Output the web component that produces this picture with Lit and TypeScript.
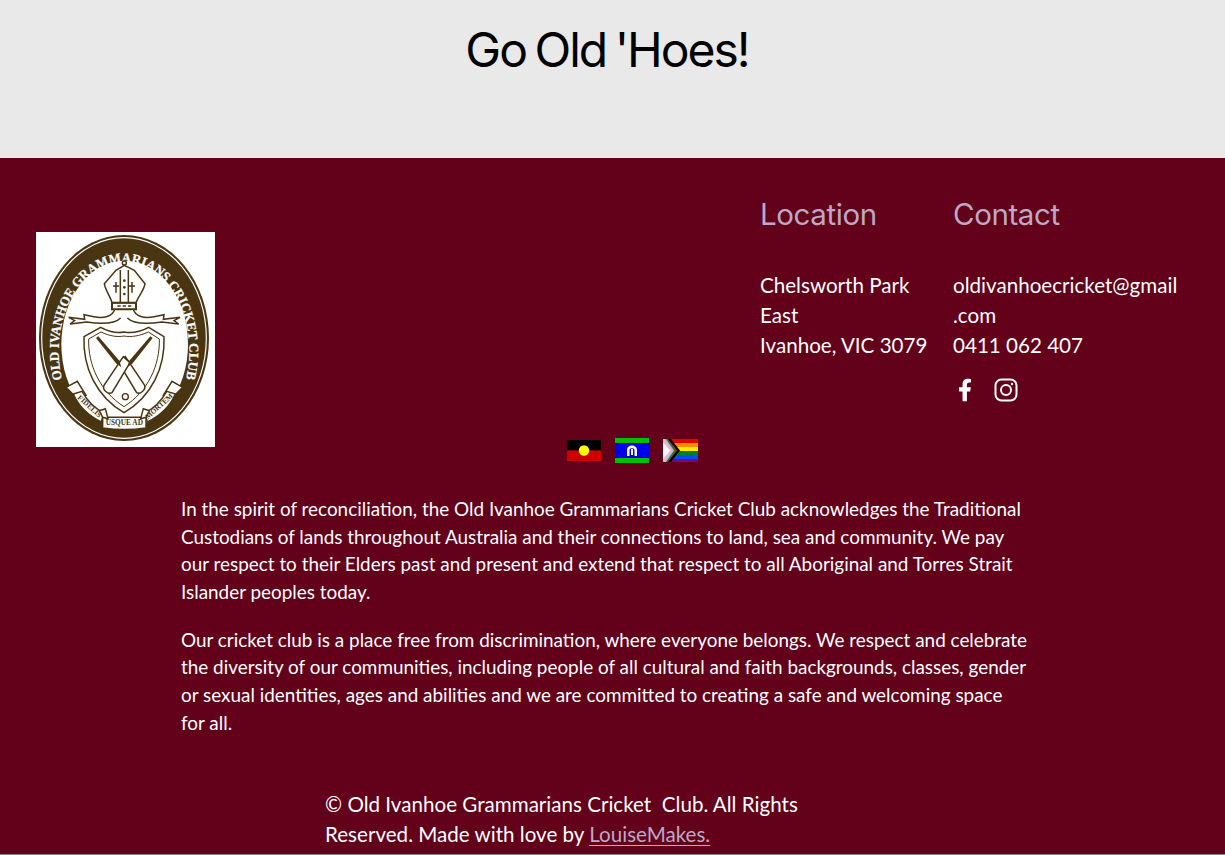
import { LitElement, html, css, svg } from "lit";
import { customElement } from "lit/decorators.js";

// crest is authored in 3x coordinates of the 179x215 badge
const crest = svg`
  <rect x="48" y="36" width="537" height="645" fill="#fff" />
  <ellipse cx="312" cy="354" rx="255" ry="309" fill="#4a3512" />
  <ellipse cx="312" cy="354" rx="247" ry="301" fill="none" stroke="#fff" stroke-width="3.5" />
  <ellipse cx="314" cy="373" rx="190" ry="251" fill="#fff" />
  <defs>
    <path id="ring" d="M 126 478 A 196 267 0 1 1 498 478" />
  </defs>
  <text class="ring-text" font-size="40">
    <textPath href="#ring" textLength="900" lengthAdjust="spacingAndGlyphs">OLD IVANHOE GRAMMARIANS CRICKET CLUB</textPath>
  </text>
  <g fill="none" stroke="#4a3512" stroke-width="4.5">
    <circle cx="313" cy="129" r="6" />
    <path d="M276 248 C270 226 256 212 253 191 L288 151 L313 136 L343 151 L375 191 C372 212 356 226 348 248 Z" fill="#fff" />
    <path d="M276 248 H348 V268 H276 Z" stroke-width="6" />
    <path d="M301 150 V246 M325 150 V246" />
    <path d="M288 186 V218 M279 198 H297 M336 186 V218 M327 198 H345" />
    <path d="M292 258 H302 M308 258 H318 M324 258 H334" />
    <path d="M284 268 C278 290 250 296 222 290 L192 284 L194 298 L146 292 L164 302 L150 312 L200 306 C240 312 284 312 302 294" fill="#fff" />
    <path d="M340 268 C346 290 374 296 402 290 L432 284 L430 298 L480 292 L462 302 L476 312 L426 306 C386 312 340 312 322 294" fill="#fff" />
    <path d="M192 350 L242 322 C268 336 292 340 312 336 C334 340 360 336 386 322 L432 350 C436 440 396 530 312 578 C228 530 188 440 192 350 Z" />
    <path d="M206 357 L243 336 C268 348 292 352 312 348 C334 352 358 348 385 336 L418 357 C420 436 384 514 312 560 C240 514 204 436 206 357 Z" stroke-width="3" />
    <path d="M296 428 L316 410 L374 496 C378 510 360 524 350 518 Z" fill="#fff" />
    <path d="M330 428 L310 410 L252 496 C246 510 264 524 276 518 Z" fill="#fff" />
    <circle cx="316" cy="530" r="9" stroke-width="4" />
    <path d="M138 502 L172 484 L198 526 L170 534 Z" fill="#fff" />
    <path d="M488 502 L456 484 L430 526 L456 534 Z" fill="#fff" />
    <path d="M160 522 L186 514 C204 546 224 566 252 578 L244 606 C208 588 176 560 160 522 Z" fill="#fff" />
    <path d="M466 522 L440 514 C422 546 402 566 374 578 L382 606 C418 588 450 560 466 522 Z" fill="#fff" />
    <path d="M248 592 H378 V624 C336 630 290 630 248 624 Z" fill="#fff" />
    <path d="M238 572 L256 566 L264 596 L248 592 Z M388 572 L370 566 L362 596 L378 592 Z" fill="#fff" />
  </g>
  <g fill="#4a3512" stroke="none">
    <path d="M228 354 L235 349 L298 422 L304 442 L288 430 Z" />
    <path d="M398 354 L391 349 L328 422 L322 442 L338 430 Z" />
    <circle cx="313" cy="182" r="4" />
    <circle cx="313" cy="202" r="4" />
    <circle cx="313" cy="222" r="4" />
  </g>
  <text class="scroll-text" font-size="22" text-anchor="middle" x="204" y="564" transform="rotate(42 204 564)">FIDELIS</text>
  <text class="scroll-text" font-size="22" text-anchor="middle" x="313" y="616">USQUE AD</text>
  <text class="scroll-text" font-size="22" text-anchor="middle" x="422" y="564" transform="rotate(-42 422 564)">MORTEM</text>
`;

const progressFlag = svg`
  <rect width="35" height="4" y="0" fill="#e40303" />
  <rect width="35" height="4" y="4" fill="#ff8c00" />
  <rect width="35" height="4" y="8" fill="#ffed00" />
  <rect width="35" height="4" y="12" fill="#008026" />
  <rect width="35" height="4" y="16" fill="#004dff" />
  <rect width="35" height="3" y="20" fill="#750787" />
  <path d="M0 0 H8 L17 11.5 L8 23 H0 Z" fill="#000" />
  <path d="M0 0 H5 L14 11.5 L5 23 H0 Z" fill="#784f17" />
  <path d="M0 0 H3 L11 11.5 L3 23 H0 Z" fill="#74d7ee" />
  <path d="M0 0 H1 L9 11.5 L1 23 H0 Z" fill="#ffafc8" />
  <path d="M0 3 L7 11.5 L0 20 Z" fill="#fff" />
`;

@customElement("app-root")
export class AppRoot extends LitElement {
  protected render() {
    return html`
      <section class="banner"><h1>Go Old 'Hoes!</h1></section>
      <footer>
        <div class="top">
          <svg class="logo" viewBox="48 36 537 645" role="img" aria-label="Old Ivanhoe Grammarians Cricket Club crest">${crest}</svg>
          <div class="col location">
            <h2>Location</h2>
            <p>Chelsworth Park<br />East<br />Ivanhoe, VIC 3079</p>
          </div>
          <div class="col">
            <h2>Contact</h2>
            <p>oldivanhoecricket@gmail<br />.com<br />0411 062 407</p>
            <div class="social">
              <svg class="fb" viewBox="0 0 320 512" fill="currentColor">
                <path d="M279 288l14-93h-89v-60c0-25 12-50 52-50h41V6s-37-6-72-6c-73 0-121 44-121 125v70H23v93h81v224h100V288z" />
              </svg>
              <svg class="ig" viewBox="0 0 24 24" fill="none" stroke="currentColor" stroke-width="2">
                <rect x="1.5" y="1.5" width="21" height="21" rx="6" />
                <circle cx="12" cy="12" r="5" />
                <circle cx="18" cy="6" r="1.2" fill="currentColor" stroke="none" />
              </svg>
            </div>
          </div>
        </div>
        <div class="flags">
          <svg width="34" height="21" viewBox="0 0 34 21">
            <rect width="34" height="10.5" fill="#000" />
            <rect width="34" height="10.5" y="10.5" fill="#cc0000" />
            <circle cx="17" cy="10.5" r="5.2" fill="#ffff00" />
          </svg>
          <svg width="34" height="25" viewBox="0 0 34 25">
            <rect width="34" height="25" fill="#00c000" />
            <rect width="34" height="15" y="5" fill="#000" />
            <rect width="34" height="14" y="5.5" fill="#0000f0" />
            <path d="M12 18 V12 C12 6 22 6 22 12 V18 H19.5 V12 C19.5 9.5 14.5 9.5 14.5 12 V18 Z" fill="#fff" />
            <rect x="16" y="11" width="2" height="6" fill="#fff" />
          </svg>
          <svg width="35" height="23" viewBox="0 0 35 23">${progressFlag}</svg>
        </div>
        <div class="ack">
          <p>
            In the spirit of reconciliation, the Old Ivanhoe Grammarians Cricket Club acknowledges the Traditional<br />
            Custodians of lands throughout Australia and their connections to land, sea and community. We pay<br />
            our respect to their Elders past and present and extend that respect to all Aboriginal and Torres Strait<br />
            Islander peoples today.
          </p>
          <p>
            Our cricket club is a place free from discrimination, where everyone belongs. We respect and celebrate<br />
            the diversity of our communities, including people of all cultural and faith backgrounds, classes, gender<br />
            or sexual identities, ages and abilities and we are committed to creating a safe and welcoming space<br />
            for all.
          </p>
        </div>
        <div class="copy">
          © Old Ivanhoe Grammarians Cricket&nbsp; Club. All Rights<br />
          Reserved. Made with love by <a href="#">LouiseMakes.</a>
        </div>
      </footer>
    `;
  }

  static styles = css`
    :host {
      display: block;
      height: 855px;
      overflow: hidden;
      background: #808080;
      font-family: "Lato", "Noto Sans", sans-serif;
      color: #fff;
    }
    .banner {
      height: 158px;
      background: #e9e9e9;
      display: flex;
      justify-content: center;
      padding-right: 11px;
      box-sizing: border-box;
    }
    h1 {
      margin: 20px 0 0;
      font-family: "Inter", sans-serif;
      font-weight: 400;
      font-size: 48px;
      line-height: 60px;
      letter-spacing: -2px;
      word-spacing: -3px;
      color: #000;
    }
    footer {
      height: 696px;
      background: #63001a;
      overflow: hidden;
    }
    .top {
      display: flex;
      align-items: flex-start;
      padding: 38px 0 0 36px;
      height: 241px;
      box-sizing: border-box;
    }
    .logo {
      width: 179px;
      height: 215px;
      margin: 36px 545px 0 0;
      flex: none;
    }
    .col {
      flex: none;
    }
    .location {
      width: 193px;
    }
    h2 {
      margin: 0 0 38px;
      font-family: "Inter", sans-serif;
      font-weight: 400;
      font-size: 29.5px;
      line-height: 36px;
      letter-spacing: -0.4px;
      color: #bba9c6;
    }
    .col p {
      margin: 0;
      font-size: 20.6px;
      line-height: 30px;
      white-space: nowrap;
    }
    .social {
      display: flex;
      align-items: center;
      gap: 22px;
      margin: 18px 0 0 5px;
    }
    .fb {
      width: 14px;
      height: 24px;
    }
    .ig {
      width: 24px;
      height: 24px;
    }
    .flags {
      display: flex;
      justify-content: center;
      align-items: center;
      gap: 14px;
      margin: 39px 0 0;
      padding-left: 40px;
      height: 25px;
    }
    .ack {
      margin: 32px 0 0 181px;
      font-size: 18.9px;
      line-height: 27.6px;
      white-space: nowrap;
    }
    .ack p {
      margin: 0 0 20.4px;
    }
    .copy {
      margin: 53px 0 0 325px;
      font-size: 20.6px;
      line-height: 30px;
      white-space: nowrap;
    }
    .copy a {
      color: #bba9c6;
      text-decoration: underline;
      text-underline-offset: 3px;
      text-decoration-thickness: 1px;
    }
    .ring-text {
      font-family: "Liberation Serif", serif;
      font-weight: 700;
      fill: #fff;
      stroke: #fff;
      stroke-width: 0.8px;
    }
    .scroll-text {
      font-family: "Liberation Serif", serif;
      font-weight: 700;
      fill: #4a3512;
    }
  `;
}
